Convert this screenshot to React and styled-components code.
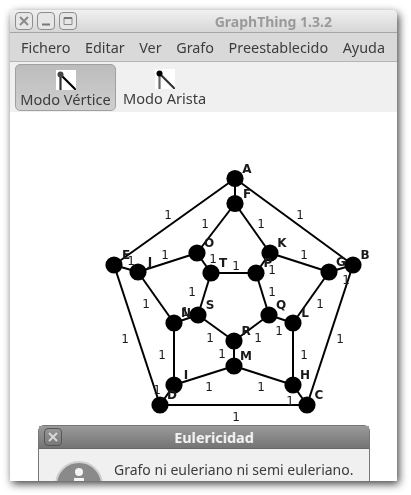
import styled, { createGlobalStyle } from "styled-components";

const GlobalStyle = createGlobalStyle`
  html, body {
    margin: 0;
    padding: 0;
    background: #ffffff;
  }
`;

const Page = styled.div`
  width: 411px;
  height: 495px;
  padding: 10px 14px 14px 10px;
  box-sizing: border-box;
  overflow: hidden;
  font-family: "Noto Sans", sans-serif;
  filter: grayscale(1);
`;

const Ventana = styled.div`
  position: relative;
  height: 471px;
  display: flex;
  flex-direction: column;
  overflow: hidden;
  border-radius: 5px 5px 0 0;
  background: #ffffff;
  box-shadow: 2px 3px 9px rgba(0, 0, 0, 0.75);
`;

const BarraTitulo = styled.div`
  height: 22px;
  flex: none;
  display: flex;
  align-items: center;
  padding: 0 0 0 5px;
  gap: 4px;
  background: linear-gradient(#f0f0ef, #d6d6d4);
  border-bottom: 1px solid #a5a5a3;
`;

const BotonVentana = styled.div`
  width: 18px;
  height: 18px;
  box-sizing: border-box;
  display: flex;
  align-items: center;
  justify-content: center;
  border: 1px solid #8d8d8b;
  border-radius: 4px;
  background: #e6e6e4;
`;

const TituloVentana = styled.div`
  flex: 1;
  text-align: right;
  padding-right: 65px;
  color: #9a9a98;
  font-size: 14px;
  font-weight: 700;
`;

const Menu = styled.div`
  height: 28px;
  flex: none;
  display: flex;
  align-items: center;
  gap: 14.5px;
  padding-left: 11px;
  background: #d9d9d7;
  border-bottom: 1px solid #b4b4b2;
  color: #3c3c3c;
  font-size: 14.4px;
`;

const BarraHerramientas = styled.div`
  height: 50px;
  flex: none;
  display: flex;
  align-items: center;
  padding: 0 5px;
  gap: 6px;
  background: #f0f0ef;
`;

const BotonModo = styled.div`
  width: ${(p) => (p.$activo ? "101px" : "auto")};
  height: 47px;
  box-sizing: border-box;
  display: flex;
  flex-direction: column;
  align-items: center;
  padding-top: ${(p) => (p.$activo ? "5px" : "4px")};
  border-radius: 5px;
  border: 1px solid ${(p) => (p.$activo ? "#a0a0a0" : "transparent")};
  background: ${(p) => (p.$activo ? "linear-gradient(#bcbcbc, #cfcfcf)" : "none")};
  color: #3c3c3c;
  font-size: 14.6px;
  line-height: 18px;
`;

const Lienzo = styled.div`
  flex: 1;
  background: #ffffff;
`;

const Dialogo = styled.div`
  position: absolute;
  left: 28px;
  top: 415px;
  width: 332px;
  height: 70px;
  box-sizing: border-box;
  background: #f0f0ef;
  border: 1px solid #777777;
  border-radius: 6px 6px 0 0;
`;

const TituloDialogo = styled.div`
  height: 22px;
  position: relative;
  display: flex;
  align-items: center;
  justify-content: center;
  padding-left: 20px;
  background: linear-gradient(#9a9a9a, #747474);
  border-bottom: 1px solid #666666;
  color: #f2f2f2;
  font-size: 14.4px;
  font-weight: 700;
`;

const CerrarDialogo = styled.div`
  position: absolute;
  left: 5px;
  top: 2px;
  width: 18px;
  height: 18px;
  box-sizing: border-box;
  display: flex;
  align-items: center;
  justify-content: center;
  border: 1px solid #555555;
  border-radius: 4px;
`;

const CuerpoDialogo = styled.div`
  display: flex;
  gap: 11px;
  padding: 11px 0 0 16px;
  color: #3c3c3c;
  font-size: 14px;
`;

const nodos = {
  A: [235, 178.5], F: [235, 203.5], O: [197, 253], K: [270, 253], E: [114, 265],
  J: [138, 272], T: [211, 273], P: [256, 273], G: [329, 272], B: [353, 265],
  N: [174, 323], S: [198, 315], Q: [269, 315], L: [293, 323], R: [234, 341],
  M: [234, 366], I: [174, 385], H: [293, 385], D: [160, 405], C: [307, 405],
};

const aristas = [
  "AF", "AE", "AB", "FO", "FK", "OJ", "OT", "KP", "KG", "EJ",
  "GB", "ED", "BC", "JN", "GL", "TP", "TS", "PQ", "NS", "QL",
  "SR", "QR", "RM", "NI", "LH", "IM", "MH", "ID", "HC", "DC",
];

const pesos = [
  [168, 214], [205, 223], [165, 254], [213, 258], [131, 260], [146, 303],
  [192, 291], [236, 265], [300, 214], [261, 223], [304, 254], [272, 269],
  [272, 291], [346, 279], [320, 303], [279, 330], [258, 337], [304, 354],
  [261, 386], [290, 400], [340, 338], [185, 311], [210, 337], [222, 353],
  [162, 354], [209, 386], [125, 338], [157, 389], [236, 416],
];

const Grafo = () => (
  <svg width="387" height="369" viewBox="10 112 387 369" style={{ display: "block" }}>
    {aristas.map((a) => {
      const [x1, y1] = nodos[a[0]];
      const [x2, y2] = nodos[a[1]];
      return <line key={a} x1={x1} y1={y1} x2={x2} y2={y2} stroke="#000" strokeWidth="2" />;
    })}
    {Object.entries(nodos).map(([n, [x, y]]) => (
      <circle key={n} cx={x} cy={y} r="8.6" fill="#000" />
    ))}
    {pesos.map(([x, y], i) => (
      <text key={i} x={x} y={y + 4.5} textAnchor="middle" fontFamily="DejaVu Sans" fontSize="12" fill="#1a1a1a">
        1
      </text>
    ))}
    {Object.entries(nodos).map(([n, [x, y]]) => (
      <text key={n} x={x + 12} y={y - 6} textAnchor="middle" fontFamily="DejaVu Sans" fontSize="12" fontWeight="700" fill="#1a1a1a">
        {n}
      </text>
    ))}
  </svg>
);

const IconoModo = ({ nodo, vertical, diagonal }) => (
  <svg width="20" height="20" viewBox="0 0 20 20" style={{ flex: "none" }}>
    <rect width="20" height="20" fill="#fff" />
    <line x1="4.5" y1="4.5" x2="4.5" y2="20" stroke={vertical} strokeWidth="2.2" />
    <line x1="4.5" y1="4.5" x2="20" y2="20" stroke={diagonal} strokeWidth="2.2" />
    <circle cx="4.5" cy="4.5" r="3" fill={nodo} />
  </svg>
);

const IconoInfo = () => (
  <svg width="48" height="48" viewBox="0 0 48 48" style={{ flex: "none", marginTop: "1px" }}>
    <circle cx="24" cy="24" r="23" fill="#8a8a8a" stroke="#d0d0d0" strokeWidth="2" />
    <circle cx="24" cy="11" r="4" fill="#f4f4f4" />
    <rect x="19" y="17" width="10" height="20" fill="#f4f4f4" />
  </svg>
);

const Equis = ({ color }) => (
  <svg width="10" height="10" viewBox="0 0 10 10">
    <path d="M1 1 L9 9 M9 1 L1 9" stroke={color} strokeWidth="2" />
  </svg>
);

export default function App() {
  return (
    <Page>
      <GlobalStyle />
      <Ventana>
        <BarraTitulo>
          <BotonVentana><Equis color="#8a8a88" /></BotonVentana>
          <BotonVentana>
            <svg width="10" height="10" viewBox="0 0 10 10"><path d="M1 8.5 H9" stroke="#777" strokeWidth="2" /></svg>
          </BotonVentana>
          <BotonVentana>
            <svg width="10" height="10" viewBox="0 0 10 10"><path d="M1 1.5 H9 V8.5 H1 Z" fill="none" stroke="#8a8a88" strokeWidth="1" /><path d="M1 2 H9" stroke="#777" strokeWidth="2" /></svg>
          </BotonVentana>
          <TituloVentana>GraphThing 1.3.2</TituloVentana>
        </BarraTitulo>
        <Menu>
          <span>Fichero</span>
          <span>Editar</span>
          <span>Ver</span>
          <span>Grafo</span>
          <span>Preestablecido</span>
          <span>Ayuda</span>
        </Menu>
        <BarraHerramientas>
          <BotonModo $activo>
            <IconoModo nodo="#444" vertical="#333" diagonal="#000" />
            Modo Vértice
          </BotonModo>
          <BotonModo>
            <IconoModo nodo="#000" vertical="#666" diagonal="#333" />
            Modo Arista
          </BotonModo>
        </BarraHerramientas>
        <Lienzo><Grafo /></Lienzo>
        <Dialogo>
          <TituloDialogo>
            <CerrarDialogo><Equis color="#d8d8d8" /></CerrarDialogo>
            Eulericidad
          </TituloDialogo>
          <CuerpoDialogo>
            <IconoInfo />
            Grafo ni euleriano ni semi euleriano.
          </CuerpoDialogo>
        </Dialogo>
      </Ventana>
    </Page>
  );
}
